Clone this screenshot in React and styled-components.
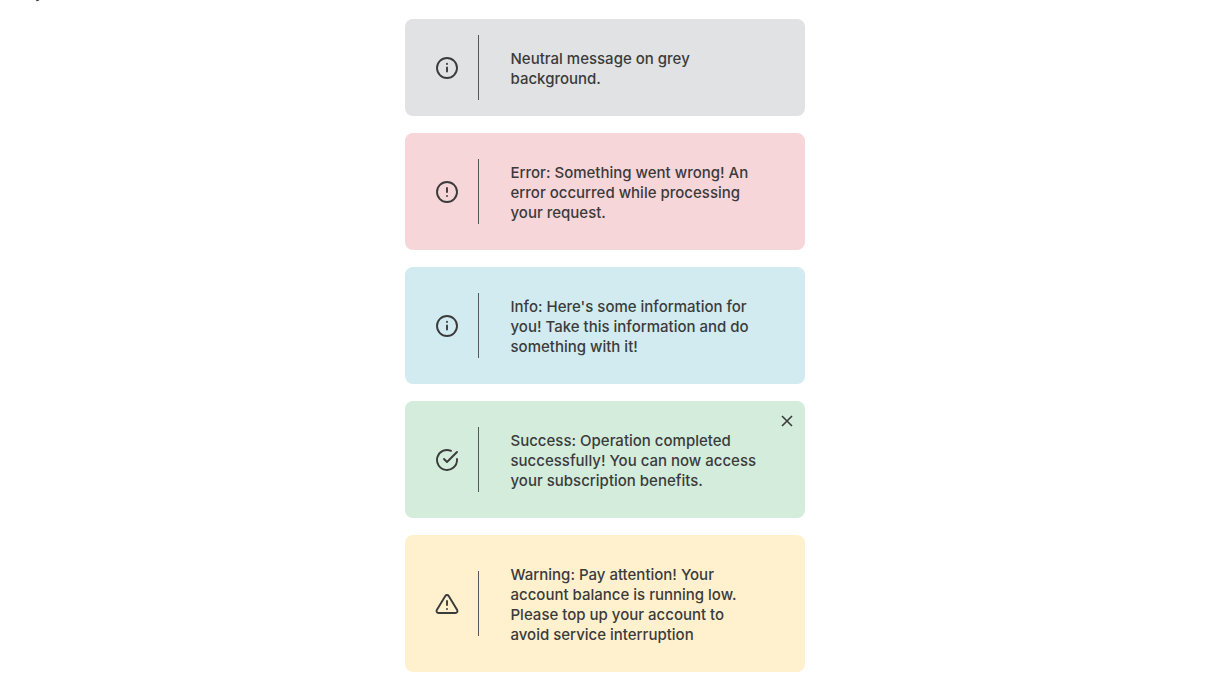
import React from "react";
import styled, { createGlobalStyle } from "styled-components";

const GlobalStyle = createGlobalStyle`
  *, *::before, *::after { box-sizing: border-box; }
  body {
    margin: 0;
    background: #ffffff;
    color: #3b3b3b;
    font-family: Inter, "Liberation Sans", sans-serif;
  }
`;

const Page = styled.main`
  padding-right: 16px;
  padding-bottom: 20px;
`;

const ScrolledLine = styled.div`
  display: flex;
  align-items: flex-end;
  height: 3px;
  margin-bottom: 16px;
  padding-left: 35px;
  overflow: hidden;
  font-size: 15px;
  line-height: 20px;
`;

const Stack = styled.section`
  display: flex;
  flex-direction: column;
  gap: 17px;
  width: 100%;
  max-width: 400px;
  margin: 0 auto;
`;

const Card = styled.div`
  position: relative;
  display: flex;
  align-items: center;
  padding: 27px 44px 27px 30px;
  border-radius: 8px;
  background: ${({ $tone }) => tones[$tone]};
`;

const Icon = styled.svg`
  flex: none;
  width: 24px;
  height: 24px;
  fill: none;
  stroke: currentColor;
  stroke-width: 1.9;
  stroke-linecap: round;
  stroke-linejoin: round;
`;

const Divider = styled.span`
  flex: none;
  width: 1px;
  height: 65px;
  margin: -16px 32px -16px 19px;
  background: #55585a;
`;

const Message = styled.p`
  flex: 1;
  margin: 0;
  padding-top: 3px;
  font-size: 15px;
  font-weight: 500;
  line-height: 20px;
`;

const CloseButton = styled.button`
  position: absolute;
  top: 10px;
  right: 8px;
  display: flex;
  padding: 2px;
  border: 0;
  background: none;
  color: inherit;
  cursor: pointer;
`;

const CloseIcon = styled.svg`
  width: 16px;
  height: 16px;
  fill: none;
  stroke: currentColor;
  stroke-width: 1.6;
`;

const tones = {
  neutral: "#e1e2e4",
  error: "#f7d6d9",
  info: "#d1ebf0",
  success: "#d4ecdb",
  warning: "#fff1ce",
};

const info = (
  <>
    <circle cx="12" cy="12" r="10" />
    <path d="M12 11.5v4M12 7.8v.3" />
  </>
);

const drawings = {
  neutral: info,
  info,
  error: (
    <>
      <circle cx="12" cy="12" r="10" />
      <path d="M12 8v4M12 16v.1" />
    </>
  ),
  success: (
    <>
      <path d="M22 11v1a10 10 0 1 1-6-9.2" />
      <path d="M22 4 12 14l-3-3" />
    </>
  ),
  warning: (
    <>
      <path d="M10.3 3.9 1.8 18A2 2 0 0 0 3.5 21h17a2 2 0 0 0 1.7-3L13.7 3.9a2 2 0 0 0-3.4 0z" />
      <path d="M12 9v4M12 17v.1" />
    </>
  ),
};

const alerts = [
  { tone: "neutral", text: "Neutral message on grey background." },
  { tone: "error", text: "Error: Something went wrong! An error occurred while processing your request." },
  { tone: "info", text: "Info: Here's some information for you! Take this information and do something with it!" },
  {
    tone: "success",
    text: "Success: Operation completed successfully! You can now access your subscription benefits.",
    closable: true,
  },
  {
    tone: "warning",
    text: "Warning: Pay attention! Your account balance is running low. Please top up your account to avoid service interruption",
  },
];

function Alert({ tone, text, closable }) {
  return (
    <Card $tone={tone} role="status">
      <Icon viewBox="0 0 24 24" aria-hidden="true">{drawings[tone]}</Icon>
      <Divider />
      <Message>{text}</Message>
      {closable && (
        <CloseButton type="button" aria-label="Close">
          <CloseIcon viewBox="0 0 16 16" aria-hidden="true">
            <path d="M3 3l10 10M13 3L3 13" />
          </CloseIcon>
        </CloseButton>
      )}
    </Card>
  );
}

export default function App() {
  return (
    <>
      <GlobalStyle />
      <Page>
        <ScrolledLine>y</ScrolledLine>
        <Stack>
          {alerts.map((alert) => (
            <Alert key={alert.tone} {...alert} />
          ))}
        </Stack>
      </Page>
    </>
  );
}
